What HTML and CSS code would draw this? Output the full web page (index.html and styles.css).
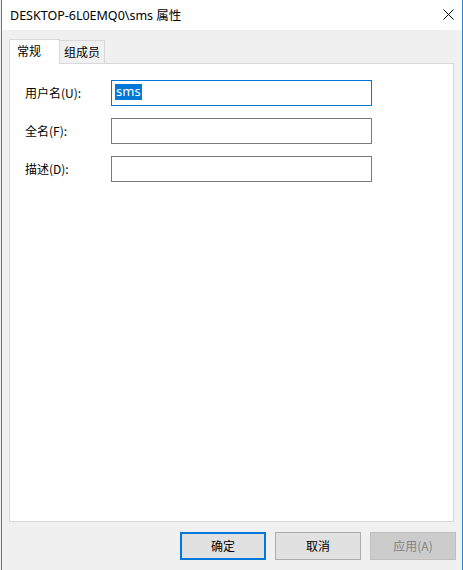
FILE: index.html
```html
<!DOCTYPE html>
<html lang="zh-CN">
<head>
  <meta charset="UTF-8">
  <meta name="viewport" content="width=device-width, initial-scale=1.0">
  <title>DESKTOP-6L0EMQ0\sms 属性</title>
  <link rel="stylesheet" href="styles.css">
</head>
<body>
  <div class="win">
    <div class="title-bar">
      <span class="title">DESKTOP-6L0EMQ0\sms 属性</span>
      <span class="close">
        <svg width="11" height="11" viewBox="0 0 11 11">
          <path d="M0.5 0.5 L10.5 10.5 M10.5 0.5 L0.5 10.5" stroke="#000" stroke-width="1" fill="none"/>
        </svg>
      </span>
    </div>
    <div class="client">
      <ul class="tabs">
        <li class="tab active">常规</li>
        <li class="tab">组成员</li>
      </ul>
      <div class="panel">
        <div class="row">
          <label>用户名(U):</label>
          <div class="field focus"><span class="sel">sms</span></div>
        </div>
        <div class="row">
          <label>全名(F):</label>
          <div class="field"></div>
        </div>
        <div class="row">
          <label>描述(D):</label>
          <div class="field"></div>
        </div>
      </div>
      <div class="btns">
        <div class="btn default">确定</div>
        <div class="btn">取消</div>
        <div class="btn disabled">应用(A)</div>
      </div>
    </div>
  </div>
</body>
</html>
```
FILE: styles.css
```css
* {
  margin: 0;
  padding: 0;
  box-sizing: border-box;
}
li {
  list-style: none;
}
body {
  background-color: #f0f0f0;
  font-family: "Noto Sans", "Noto Sans CJK SC", sans-serif;
  font-size: 12px;
  color: #000;
}
.win {
  margin-left: 1px;
  width: 462px;
  height: 570px;
  border-left: 1px solid #2b84d3;
  border-right: 1px solid #2b84d3;
  display: flex;
  flex-direction: column;
  background-color: #f0f0f0;
}
.title-bar {
  height: 30px;
  background-color: #fff;
  display: flex;
  align-items: center;
  justify-content: space-between;
  padding: 0 9px 2px 8px;
}
.title {
  font-size: 12.5px;
}
.close {
  display: flex;
  margin-right: -1px;
}
.client {
  flex: 1;
  display: flex;
  flex-direction: column;
  padding: 8px 8px 10px 7px;
}
.tabs {
  display: flex;
  align-items: flex-end;
  height: 25px;
}
.tab {
  height: 23px;
  width: 45px;
  border: 1px solid #d9d9d9;
  border-bottom: none;
  border-left: none;
  text-align: center;
  line-height: 22px;
  font-family: "Noto Sans CJK SC", sans-serif;
}
.tab.active {
  height: 25px;
  width: 51px;
  background-color: #fff;
  border-left: 1px solid #d9d9d9;
  text-align: left;
  padding-left: 7px;
  line-height: 21px;
  margin-bottom: -1px;
  position: relative;
  z-index: 1;
}
.panel {
  flex: 1;
  background-color: #fff;
  border: 1px solid #d9d9d9;
  padding: 16px 0 0 15px;
  display: flex;
  flex-direction: column;
  gap: 12px;
}
.row {
  display: flex;
  align-items: center;
  height: 26px;
}
.row label {
  width: 86px;
  font-family: "Noto Sans CJK SC", sans-serif;
  position: relative;
  top: -1px;
}
.field {
  width: 261px;
  height: 26px;
  border: 1px solid #7a7a7a;
  background-color: #fff;
  display: flex;
  align-items: center;
  padding-left: 3px;
}
.field.focus {
  border-color: #0078d7;
}
.sel {
  background-color: #0078d7;
  color: #fff;
  height: 16px;
  line-height: 15px;
  padding: 0 1px;
  font-size: 13px;
  font-family: "Noto Sans", sans-serif;
  position: relative;
  top: -1px;
}
.btns {
  display: flex;
  justify-content: flex-end;
  gap: 9px;
  margin-top: 10px;
  margin-right: -2px;
}
.btn {
  width: 86px;
  height: 28px;
  border: 1px solid #adadad;
  background-color: #e1e1e1;
  text-align: center;
  line-height: 26px;
  font-family: "Noto Sans CJK SC", sans-serif;
}
.btn.default {
  border: 2px solid #0078d7;
  line-height: 24px;
}
.btn.disabled {
  background-color: #cccccc;
  border-color: #bfbfbf;
  color: #838383;
}
```
